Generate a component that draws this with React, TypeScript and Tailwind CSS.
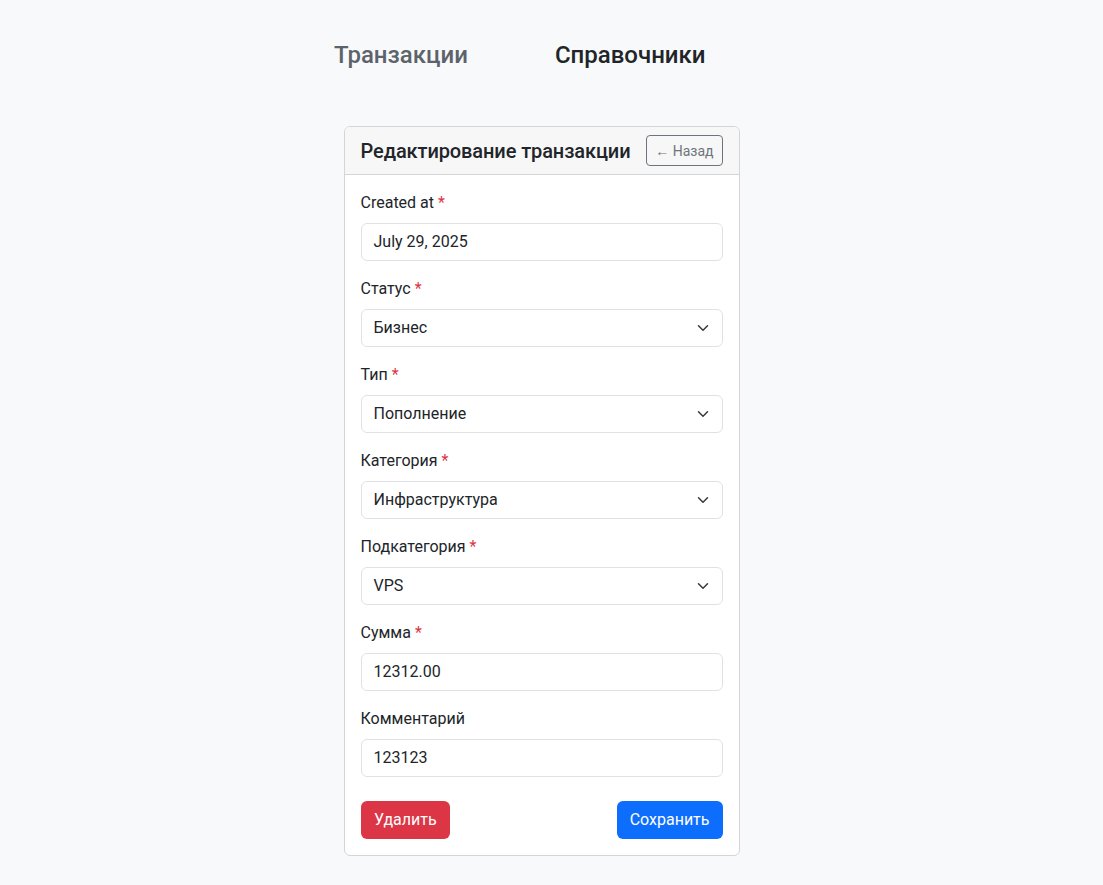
import React from 'react';

const font = { fontFamily: 'Roboto, "Liberation Sans", sans-serif' };

// bootstrap-ish select chevron
const Chevron = () => (
  <svg width="12" height="12" viewBox="0 0 16 16" className="absolute right-[14px] top-1/2 -translate-y-1/2 pointer-events-none">
    <path d="m2 5 6 6 6-6" fill="none" stroke="#343a40" strokeWidth="2" strokeLinecap="round" strokeLinejoin="round" />
  </svg>
);

type Field = { label: string; value: string; required?: boolean; select?: boolean };

const fields: Field[] = [
  { label: 'Created at', value: 'July 29, 2025', required: true },
  { label: 'Статус', value: 'Бизнес', required: true, select: true },
  { label: 'Тип', value: 'Пополнение', required: true, select: true },
  { label: 'Категория', value: 'Инфраструктура', required: true, select: true },
  { label: 'Подкатегория', value: 'VPS', required: true, select: true },
  { label: 'Сумма', value: '12312.00', required: true },
  { label: 'Комментарий', value: '123123' },
];

const App: React.FC = () => {
  return (
    <div className="min-h-screen bg-[#f8f9fa] text-[#212529]" style={font}>
      {/* top nav */}
      <nav className="flex items-center gap-[87px] pl-[334px] pt-[39px] h-[71px]">
        <span className="text-[24px] leading-[32px] font-medium text-[#5c636a]">Транзакции</span>
        <span className="text-[24px] leading-[32px] font-medium text-[#212529]">Справочники</span>
      </nav>

      <div className="flex justify-center pr-[20px] pt-[55px] pb-[30px]">
        <div className="w-[396px] bg-white border border-[#d3d5d8] rounded-[6px] overflow-hidden">
          <div className="flex items-center justify-between h-[48px] px-4 bg-[#f7f7f7] border-b border-[#d3d5d8]">
            <h2 className="text-[20px] font-medium leading-6 tracking-[-0.1px]">Редактирование транзакции</h2>
            <button className="h-[31px] px-2 text-[14px] text-[#6c757d] border border-[#6c757d] rounded-[4px] leading-none">
              ← Назад
            </button>
          </div>

          <div className="p-4">
            {fields.map((f) => (
              <div key={f.label} className="mb-4">
                <label className="block mb-2 text-[16px] leading-6">
                  {f.label}
                  {f.required && <span className="text-[#dc3545]"> *</span>}
                </label>
                <div className="relative">
                  <div className="h-[38px] flex items-center px-3 border border-[#dee2e6] rounded-[6px] text-[16px]">
                    {f.value}
                  </div>
                  {f.select && <Chevron />}
                </div>
              </div>
            ))}

            <div className="flex justify-between mt-[24px]">
              <button className="h-[38px] px-[13.5px] rounded-[6px] bg-[#dc3545] text-white text-[16px]">Удалить</button>
              <button className="h-[38px] px-[13px] rounded-[6px] bg-[#0d6efd] text-white text-[16px]">Сохранить</button>
            </div>
          </div>
        </div>
      </div>
    </div>
  );
};

export default App;
